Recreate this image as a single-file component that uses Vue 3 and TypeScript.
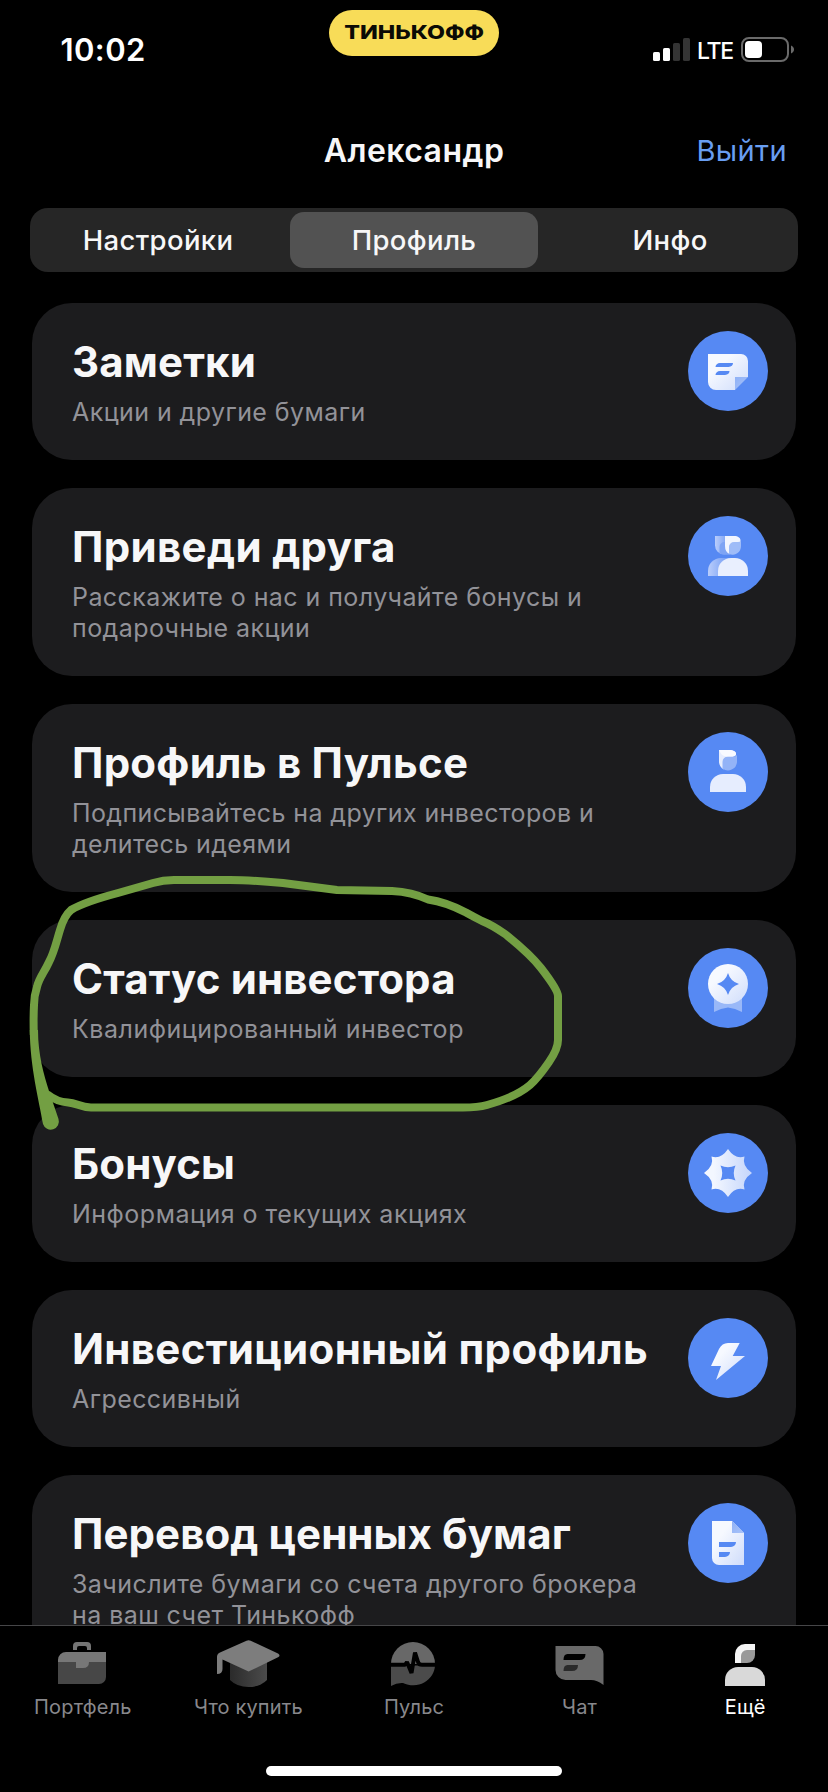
<script setup lang="ts">
import { ref } from 'vue'

type CardIcon = 'note' | 'friends' | 'person' | 'medal' | 'bonus' | 'bolt' | 'doc'

interface Card {
  icon: CardIcon
  title: string
  lines: string[]
}

const segments: string[] = ['Настройки', 'Профиль', 'Инфо']
const activeSegment = ref(1)

const cards: Card[] = [
  { icon: 'note', title: 'Заметки', lines: ['Акции и другие бумаги'] },
  { icon: 'friends', title: 'Приведи друга', lines: ['Расскажите о нас и получайте бонусы и', 'подарочные акции'] },
  { icon: 'person', title: 'Профиль в Пульсе', lines: ['Подписывайтесь на других инвесторов и', 'делитесь идеями'] },
  { icon: 'medal', title: 'Статус инвестора', lines: ['Квалифицированный инвестор'] },
  { icon: 'bonus', title: 'Бонусы', lines: ['Информация о текущих акциях'] },
  { icon: 'bolt', title: 'Инвестиционный профиль', lines: ['Агрессивный'] },
  { icon: 'doc', title: 'Перевод ценных бумаг', lines: ['Зачислите бумаги со счета другого брокера', 'на ваш счет Тинькофф'] },
]

const tabs: string[] = ['Портфель', 'Что купить', 'Пульс', 'Чат', 'Ещё']
const activeTab = ref(4)
</script>

<template>
  <div class="screen">
    <svg class="defs" width="0" height="0" aria-hidden="true">
      <defs>
        <linearGradient id="gDiag" x1="0" y1="0" x2="1" y2="1">
          <stop offset="0.3" stop-color="#f6f9ff" />
          <stop offset="1" stop-color="#cfdcfb" />
        </linearGradient>
        <linearGradient id="gSide" x1="0" y1="0" x2="1" y2="0">
          <stop offset="0.2" stop-color="#f3f7ff" />
          <stop offset="1" stop-color="#c4d5fb" />
        </linearGradient>
        <linearGradient id="gBack" x1="0" y1="0" x2="1" y2="0">
          <stop offset="0" stop-color="#b9cdfb" />
          <stop offset="0.8" stop-color="#7ba2f5" />
        </linearGradient>
        <linearGradient id="gFold" x1="0" y1="0" x2="1" y2="1">
          <stop offset="0" stop-color="#8fb1f6" />
          <stop offset="1" stop-color="#a9c3f9" />
        </linearGradient>
        <linearGradient id="gCap" x1="0" y1="0" x2="1" y2="0">
          <stop offset="0" stop-color="#2b2b2b" />
          <stop offset="1" stop-color="#4b4b4b" />
        </linearGradient>
      </defs>
    </svg>

    <header class="status">
      <span class="time">10:02</span>
      <span class="pill"><span class="brand">ТИНЬКОФФ</span></span>
      <div class="indicators">
        <svg class="signal" width="37" height="24" viewBox="0 0 37 24">
          <rect x="0" y="14" width="7" height="9" rx="1.6" fill="#fff" />
          <rect x="10" y="10" width="7" height="13" rx="1.6" fill="#fff" />
          <rect x="20" y="5" width="7" height="18" rx="1.6" fill="#343434" />
          <rect x="30" y="0" width="7" height="23" rx="1.6" fill="#343434" />
        </svg>
        <span class="lte">LTE</span>
        <svg class="battery" width="53" height="25" viewBox="0 0 53 25">
          <rect x="1" y="1" width="46" height="23" rx="7" fill="none" stroke="#6a6a6a" stroke-width="2" />
          <rect x="4" y="4" width="17" height="17" rx="4" fill="#fff" />
          <path d="M50 8.5c4 1.5 4 6.500 0 8z" fill="#6a6a6a" />
        </svg>
      </div>
    </header>

    <div class="navbar">
      <h1 class="name">Александр</h1>
      <button class="logout" type="button">Выйти</button>
    </div>

    <div class="segmented">
      <button
        v-for="(s, i) in segments"
        :key="s"
        type="button"
        class="segment"
        :class="{ selected: i === activeSegment }"
        @click="activeSegment = i"
      >{{ s }}</button>
    </div>

    <main class="list">
      <article v-for="card in cards" :key="card.icon" class="card" :class="card.icon">
        <div class="texts">
          <h2 class="title">{{ card.title }}</h2>
          <p class="sub"><span v-for="l in card.lines" :key="l" class="line">{{ l }}</span></p>
        </div>
        <svg class="icon" width="80" height="80" viewBox="0 0 80 80">
          <circle cx="40" cy="40" r="40" fill="#5689f3" />
          <g v-if="card.icon === 'note'">
            <path d="M20 23H53a7 7 0 0 1 7 7V46H47V59H28a8 8 0 0 1-8-8z" fill="url(#gDiag)" />
            <path d="M47 46H60L47 59z" fill="url(#gFold)" />
            <path d="M32 32H45a5 4 0 0 1-4.500 4H27.500a4.500 4 0 0 1 4.500-4zM32 40H41.500a5 4 0 0 1-4.500 4H27.500a4.500 4 0 0 1 4.500-4z" fill="#5689f3" />
          </g>
          <g v-else-if="card.icon === 'friends'">
            <path d="M27 20H42V38.500H36a9 9 0 0 1-9-9z" fill="url(#gBack)" />
            <path d="M31.500 37.200V31a5 5 0 0 1 5-5H42V38.500H36q-2.500 0-4.500-1.300z" fill="#7ea4f4" />
            <path d="M20 60V55a13 13 0 0 1 13-13H42V60z" fill="url(#gBack)" />
            <path d="M37 20H46c4 0 7 2 6.500 5c0 2-2 2.500-4 2.500H45q-3.500 0-3.500 4V38q-4.500-2-4.500-8z" fill="#f1f5ff" />
            <path d="M41 38V31a5 5 0 0 1 5-5H50q2 0 3-1.500V30a8.500 8.500 0 0 1-12 8z" fill="#9fbcf8" />
            <path d="M30 60V55a13 13 0 0 1 13-13h4a13 13 0 0 1 13 13v5z" fill="#e9effe" />
          </g>
          <g v-else-if="card.icon === 'person'">
            <path d="M31 18H41c4 0 7.500 1.500 7 4.500c-.5 2-3 2.500-5 2.500H40q-4 0-4 5V37.500q-5-2.500-5-8z" fill="#e6edfe" />
            <path d="M34.500 36.500V30a5.500 5.500 0 0 1 5.500-5.500H45q3 0 4-1.500V30a9 9 0 0 1-14.500 6.500z" fill="#93b3f7" />
            <path d="M31 18H41c4 0 7.500 1.500 7 4.500c-.5 1.500-3 2-5 2H38q-5-1-7-6.500z" fill="#f8faff" />
            <path d="M22 60V55a13 13 0 0 1 13-13H45a13 13 0 0 1 13 13v5z" fill="#e6edfe" />
          </g>
          <g v-else-if="card.icon === 'medal'">
            <path d="M26 50H54V64Q47 60 40 59.500Q33 60 26 64z" fill="#99b8f8" />
            <circle cx="40" cy="36" r="20" fill="url(#gDiag)" />
            <path d="M40 25Q42.500 33.500 51 36Q42.500 38.500 40 47Q37.500 38.500 29 36Q37.500 33.500 40 25z" fill="#5689f3" />
          </g>
          <g v-else-if="card.icon === 'bonus'">
            <path d="M40 16Q47 26.500 56.500 23.500Q53.500 33 64 40Q53.500 47 56.500 56.500Q47 53.500 40 64Q33 53.500 23.500 56.500Q26.500 47 16 40Q26.500 33 23.500 23.500Q33 26.500 40 16z" fill="url(#gSide)" />
            <path d="M32.500 32.500Q40 36 47.500 32.500Q44 40 47.500 47.500Q40 44 32.500 47.500Q36 40 32.500 32.500z" fill="#5689f3" />
          </g>
          <g v-else-if="card.icon === 'bolt'">
            <path d="M40 25H51.700L44.700 38H57L28 62L33 48H23L31 31Q34 25 40 25z" fill="url(#gDiag)" />
          </g>
          <g v-else>
            <path d="M24 18H44L56 30V62H31a7 7 0 0 1-7-7z" fill="url(#gDiag)" />
            <path d="M44 18V30H56z" fill="url(#gFold)" />
            <path d="M31 39H48a5 5 0 0 1-5 5H31zM31 49H42a5 5 0 0 1-5 5H31z" fill="#5689f3" />
          </g>
        </svg>
      </article>
    </main>

    <nav class="tabbar">
      <div class="tabs">
        <button
          v-for="(t, i) in tabs"
          :key="t"
          type="button"
          class="tab"
          :class="{ active: i === activeTab }"
          @click="activeTab = i"
        >
          <svg width="66" height="48" viewBox="0 0 66 48">
            <g v-if="i === 0">
              <path d="M23 10V6a4 4 0 0 1 4-4H37a4 4 0 0 1 4 4v4H37V8q0-2-2-2H29q-2 0-2 2v2z" fill="#757575" />
              <path d="M8 21H56V37a7 7 0 0 1-7 7H8z" fill="#474747" />
              <path d="M8 22V20a8 8 0 0 1 8-8H56V22H39q0 6-6 6H26V22z" fill="#777" />
            </g>
            <g v-else-if="i === 1">
              <path d="M15 20H52V40Q45 47 33.500 47Q22 47 15 40z" fill="url(#gCap)" />
              <path d="M31.500 .8Q33.600 -.2 35.700 .8L63 13.500Q66 15.500 63 17.300L33.600 31.500L7.500 19.500V29Q7.500 34 2 34V17Q2 14 5 12.600z" fill="#7d7d7d" />
            </g>
            <g v-else-if="i === 2">
              <path d="M10 24A22 22 0 0 1 54 24z" fill="#686868" />
              <path d="M10 25.500H54A22 20.500 0 0 1 22 43Q16 42.500 10 46z" fill="#4b4b4b" />
              <path d="M9 24.700H24.200L26 22L30.500 33L34 12.500L37.200 22.500Q38 24.700 41 24.700H55" fill="none" stroke="#000" stroke-width="4" stroke-linejoin="bevel" />
            </g>
            <g v-else-if="i === 3">
              <path d="M8.500 6H48a8 8 0 0 1 8.500 8V45Q50 40 44 40H18.500a10 10 0 0 1-10-10z" fill="#696969" />
              <path d="M20.500 14H38.500q0 6-6 6H16.500q0-6 4-6z" fill="#000" />
              <path d="M20.500 25H31q0 6-6 6H16.500q0-6 4-6z" fill="#2a2a2a" />
            </g>
            <g v-else>
              <path d="M23 23V14a10 10 0 0 1 10-10H43V12L30 23z" fill="#f5f5f5" />
              <path d="M29 23V16a6 6 0 0 1 6-6H43V15a8 8 0 0 1-8 8z" fill="#999" />
              <path d="M13 46V40a13 13 0 0 1 13-13H40a13 13 0 0 1 13 13v6z" fill="#d9d9d9" />
            </g>
          </svg>
          <span class="tab-label">{{ t }}</span>
        </button>
      </div>
      <div class="home"></div>
    </nav>

    <svg class="marker" width="828" height="1792" viewBox="0 0 828 1792">
      <path
        d="M47 1094Q57 1102 68 1102.500C77 1103 80 1107.500 91 1107.500H463Q478 1107.500 487 1105Q516 1097 530 1085Q538 1078 549 1062Q558 1049 558 1040V996Q558 990 541 968C529 953 516 943 505 934Q492 925 482 921Q474 917 466 912.500Q446 902 428 899.500Q412 892 392 891L337 890Q313 887 283 883Q250 880 230 880H174Q163 880 153 883L118 893Q84 902 71 910Q64 916 60 930C56 943 54 953 49 962C44 973 39 978 37 987Q34 996 34 1005Q33.300 1018 33.800 1035"
        fill="none" stroke="#739f43" stroke-width="8" stroke-linejoin="round" />
      <path d="M29.800 1030L38 1030C38 1055 44 1075 49 1091L58.500 1119A8 8 0 0 1 43 1124C39 1100 30 1067 29.800 1030z" fill="#739f43" />
    </svg>
  </div>
</template>

<style>
html,
body {
  background: #000;
}
</style>

<style scoped>
.screen {
  position: relative;
  display: flex;
  flex-direction: column;
  width: 828px;
  height: 1792px;
  overflow: hidden;
  background: #000;
  color: #f7f7f8;
  font-family: Inter, "Liberation Sans", sans-serif;
}
.defs {
  position: absolute;
}
button {
  margin: 0;
  padding: 0;
  border: 0;
  background: none;
  color: inherit;
  font: inherit;
}
h1, h2, p {
  margin: 0;
}
.status {
  display: grid;
  grid-template-columns: 329px 170px 329px;
  height: 110px;
  flex: none;
}
.time {
  padding: 29px 0 0 60.5px;
  font-size: 31px;
  line-height: 42px;
  font-weight: 600;
  letter-spacing: 0.4px;
  color: #fff;
}
.pill {
  display: flex;
  align-items: center;
  justify-content: center;
  height: 46px;
  margin-top: 10px;
  border-radius: 23px;
  background: #f8dc58;
  color: #0b0a05;
}
.brand {
  font-size: 19px;
  line-height: 46px;
  font-weight: 800;
  transform: scaleX(1.225);
}
.indicators {
  display: flex;
  align-items: flex-start;
  padding-left: 154px;
}
.signal {
  margin-top: 38px;
}
.lte {
  width: 45px;
  margin: 35px 0 0 7px;
  font-size: 23px;
  line-height: 32px;
  font-weight: 500;
  letter-spacing: -1.3px;
  color: #fff;
}
.battery {
  margin: 37px 0 0 -1px;
}
.navbar {
  display: grid;
  grid-template-columns: 1fr auto 1fr;
  height: 98px;
  flex: none;
  padding: 0 41px;
  align-items: start;
}
.name {
  grid-column: 2;
  margin-top: 20px;
  font-size: 32px;
  line-height: 42px;
  font-weight: 600;
  letter-spacing: 0.45px;
}
.logout {
  justify-self: end;
  margin-top: 20px;
  font-size: 29px;
  line-height: 42px;
  letter-spacing: 0.4px;
  color: #689ef2;
}
.segmented {
  display: flex;
  flex: none;
  width: 768px;
  height: 64px;
  margin-left: 30px;
  border-radius: 18px;
  background: #262626;
}
.segment {
  flex: 1;
  margin: 4px;
  border-radius: 14px;
  font-size: 27.5px;
  line-height: 57px;
  font-weight: 500;
  letter-spacing: 0.35px;
}
.selected {
  background: #525252;
}
.list {
  display: flex;
  flex-direction: column;
  gap: 28px;
  height: 1322px;
  flex: none;
  margin-top: 31px;
  padding: 0 32px;
  overflow: hidden;
  box-sizing: border-box;
}
.card {
  display: flex;
  justify-content: space-between;
  flex: none;
  padding: 28px 28px 32px 40px;
  border-radius: 40px;
  background: #1c1c1e;
}
.texts {
  padding-top: 6px;
  white-space: nowrap;
}
.title {
  font-size: 42px;
  line-height: 50px;
  font-weight: 700;
  letter-spacing: 0.15px;
}
.sub {
  margin-top: 10px;
  font-size: 25px;
  line-height: 31px;
  letter-spacing: 0.43px;
  color: #929298;
}
.friends .title {
  letter-spacing: 0.35px;
}
.person .title {
  letter-spacing: 0.25px;
}
.bolt .title {
  letter-spacing: 0.32px;
}
.doc .title {
  letter-spacing: 0.07px;
}
.person .sub {
  letter-spacing: 0.39px;
}
.medal .sub {
  letter-spacing: 0.53px;
}
.bonus .sub {
  letter-spacing: 0.5px;
}
.line {
  display: block;
}
.icon {
  flex: none;
  margin-bottom: -20px;
}
.tabbar {
  display: flex;
  flex-direction: column;
  flex: none;
  height: 167px;
  border-top: 1px solid #464648;
  box-sizing: border-box;
}
.tabs {
  display: flex;
  height: 140px;
  flex: none;
}
.tab {
  display: flex;
  flex: 1;
  flex-direction: column;
  align-items: center;
  padding-top: 14px;
  color: #88888c;
}
.tab-label {
  margin-top: 7px;
  font-size: 20px;
  line-height: 24px;
  letter-spacing: 0.15px;
}
.active {
  color: #fff;
}
.home {
  width: 296px;
  height: 10px;
  margin-left: 266px;
  border-radius: 5px;
  background: #fff;
}
.marker {
  position: absolute;
  left: 0;
  top: 0;
  pointer-events: none;
}
</style>
